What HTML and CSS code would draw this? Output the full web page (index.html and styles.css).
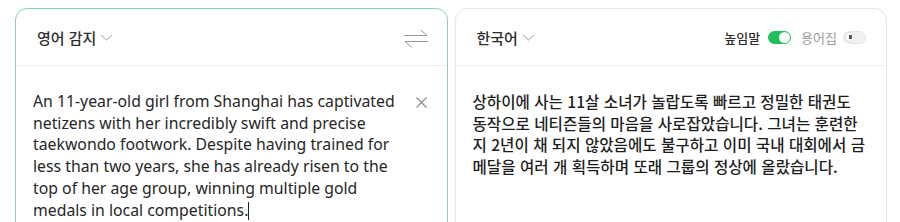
FILE: index.html
```html
<!DOCTYPE html>
<html lang="ko">
<head>
<meta charset="utf-8">
<link rel="stylesheet" href="styles.css">
</head>
<body>
<div class="panes">
  <section class="card card-source">
    <header class="card-head">
      <div class="lang">영어 감지 <svg class="chev" width="13" height="7" viewBox="0 0 13 7"><path d="M1 1l5.5 5L12 1" fill="none" stroke="#a0a0a0" stroke-width="1"/></svg></div>
      <svg class="swap" width="26" height="19" viewBox="0 0 26 19"><path d="M1 6.5h23L17.5 0.8M25 12.5H2L8.5 18.2" fill="none" stroke="#999" stroke-width="1"/></svg>
    </header>
    <div class="card-body">
      <p class="src-text">An 11-year-old girl from Shanghai has captivated netizens with her incredibly swift and precise taekwondo footwork. Despite having trained for less than two years, she has already risen to the top of her age group, winning multiple gold medals in local competitions.<span class="caret"></span></p>
      <svg class="clear" width="11" height="11" viewBox="0 0 11 11"><path d="M0.5 0.5l10 10M10.5 0.5l-10 10" stroke="#8a8a8a" stroke-width="1.1"/></svg>
    </div>
  </section>
  <section class="card card-target">
    <header class="card-head">
      <div class="lang">한국어 <svg class="chev" width="13" height="7" viewBox="0 0 13 7"><path d="M1 1l5.5 5L12 1" fill="none" stroke="#a0a0a0" stroke-width="1"/></svg></div>
      <div class="opts">
        <span class="opt">높임말</span>
        <span class="toggle on"><span class="knob"></span></span>
        <span class="opt opt-off">용어집</span>
        <span class="toggle off"><span class="knob"><span class="dot"></span></span></span>
      </div>
    </header>
    <div class="card-body">
      <p class="dst-text">상하이에 사는 11살 소녀가 놀랍도록 빠르고 정밀한 태권도 동작으로 네티즌들의 마음을 사로잡았습니다. 그녀는 훈련한 지 2년이 채 되지 않았음에도 불구하고 이미 국내 대회에서 금메달을 여러 개 획득하며 또래 그룹의 정상에 올랐습니다.</p>
    </div>
  </section>
</div>
</body>
</html>
```

FILE: styles.css
```css
* { box-sizing: border-box; }
html, body { margin: 0; padding: 0; background: #fff; }
body {
  font-family: "Noto Sans", "Noto Sans CJK KR", sans-serif;
  color: #222;
  overflow: hidden;
}
.panes {
  display: flex;
  gap: 7px;
  padding: 8px 13px 0 15px;
  height: 222px;
  overflow: hidden;
}
.card {
  flex: 1 1 0;
  border: 1px solid #e6e6e6;
  border-radius: 12px;
  height: 240px;
  display: flex;
  flex-direction: column;
}
.card-source { border-color: #7fd6ad; }
.card-head {
  height: 57px;
  border-bottom: 1px solid #efefef;
  display: flex;
  align-items: center;
  justify-content: space-between;
  padding: 0 18px 0 21px;
}
.card-target .card-head { padding: 0 20px 0 21px; }
.lang {
  font-family: "Noto Sans CJK KR", sans-serif;
  font-size: 15px;
  font-weight: 500;
  color: #2e2e2e;
  display: flex;
  align-items: center;
  gap: 4px;
}
.chev { margin-top: 1px; }
.swap { margin-top: 2px; }
.opts {
  display: flex;
  align-items: center;
  font-family: "Noto Sans CJK KR", sans-serif;
  font-size: 13px;
  font-weight: 500;
}
.opt { color: #2e2e2e; }
.opt-off { color: #9a9a9a; font-weight: 400; margin-left: 10px; }
.toggle {
  width: 23px;
  height: 13px;
  border-radius: 7px;
  display: inline-flex;
  align-items: center;
  margin-left: 8px;
  padding: 1px;
}
.toggle.on { background: #1fbf5b; justify-content: flex-end; }
.toggle.off { background: #f2f2f2; border: 1px solid #e4e4e4; margin-left: 6px; }
.knob {
  width: 11px;
  height: 11px;
  border-radius: 50%;
  background: #fff;
  display: flex;
  align-items: center;
  justify-content: center;
}
.toggle.off .knob { width: 10px; height: 10px; border: 1px solid #dcdcdc; }
.dot { width: 3px; height: 4px; background: #555; }
.card-body {
  display: flex;
  align-items: flex-start;
  padding: 25px 20px 0 17px;
}
.src-text {
  margin: 0;
  flex: 1;
  font-size: 15.8px;
  line-height: 21.7px;
  color: #262626;
}
.caret {
  display: inline-block;
  width: 1px;
  height: 18px;
  background: #222;
  vertical-align: -4px;
}
.clear { margin-top: 6px; margin-left: 14px; flex: none; }
.dst-text {
  margin: 0;
  font-family: "Noto Sans CJK KR", sans-serif;
  font-weight: 500;
  font-size: 15.6px;
  line-height: 21.7px;
  color: #1e1e1e;
}
```
